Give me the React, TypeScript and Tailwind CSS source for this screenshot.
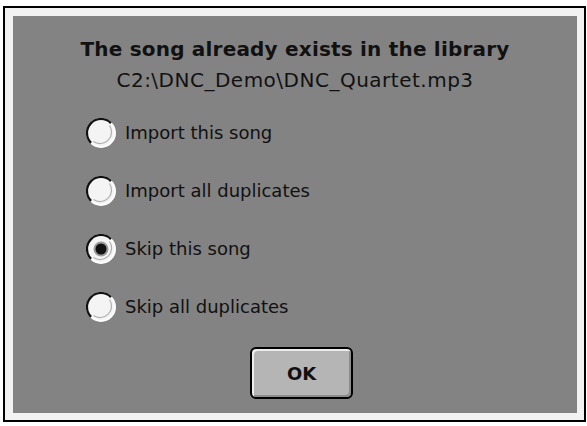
import React from "react";

function Radio({ checked }: { checked?: boolean }) {
  return (
    <svg width="30" height="30" viewBox="0 0 30 30" className="shrink-0">
      <circle cx="15" cy="15" r="14" fill="#f4f4f4" />
      <path d="M 5.1 24.9 A 14 14 0 0 1 24.9 5.1" fill="none" stroke="#ffffff" strokeWidth="2" />
      <path d="M 24.9 5.1 A 14 14 0 0 1 5.1 24.9" fill="none" stroke="#ffffff" strokeWidth="2" />
      <path d="M 5.1 24.9 A 14 14 0 0 1 24.9 5.1" fill="none" stroke="#111111" strokeWidth="2.2" />
      <path d="M 23.5 7.5 A 11.5 11.5 0 0 1 7.5 23.5" fill="none" stroke="#b0b0b0" strokeWidth="1.2" />
      {checked && (
        <>
          <circle cx="15" cy="15" r="7.5" fill="#9a9a9a" />
          <circle cx="15" cy="15" r="5.5" fill="#111111" />
        </>
      )}
    </svg>
  );
}

const options = [
  { label: "Import this song", checked: false },
  { label: "Import all duplicates", checked: false },
  { label: "Skip this song", checked: true },
  { label: "Skip all duplicates", checked: false },
];

export default function App() {
  return (
    <div
      className="w-[587px] h-[426px] bg-white pt-[6px] pl-[3px] pr-[1px] pb-[4px]"
      style={{ fontFamily: '"DejaVu Sans", Verdana, sans-serif' }}
    >
      <div className="h-full border-2 border-black bg-[#f2f2f2] pt-[8px] pl-[8px] pr-[7px] pb-[7px]">
        <div className="h-full bg-[#838383] flex flex-col text-[#111]">
          <div className="pt-[21px] text-center text-[20px] leading-[24px] font-bold tracking-[0.2px]">
            The song already exists in the library
          </div>
          <div className="mt-[7px] text-center text-[20px] leading-[24px] tracking-[0.5px]">
            C2:\DNC_Demo\DNC_Quartet.mp3
          </div>
          <div className="mt-[26px] pl-[73px] flex flex-col gap-[28px]">
            {options.map((o) => (
              <div key={o.label} className="h-[30px] flex items-center gap-[9px]">
                <Radio checked={o.checked} />
                <span className="text-[18px] leading-[22px]">{o.label}</span>
              </div>
            ))}
          </div>
          <div className="mt-[25px] flex justify-center pl-[13px]">
            <div className="w-[103px] h-[52px] rounded-[6px] border-2 border-black bg-[#b5b5b5] shadow-[inset_2px_2px_0_#ececec,inset_-2px_-2px_0_#8c8c8c] flex items-center justify-center text-[18px] font-bold">
              OK
            </div>
          </div>
        </div>
      </div>
    </div>
  );
}
